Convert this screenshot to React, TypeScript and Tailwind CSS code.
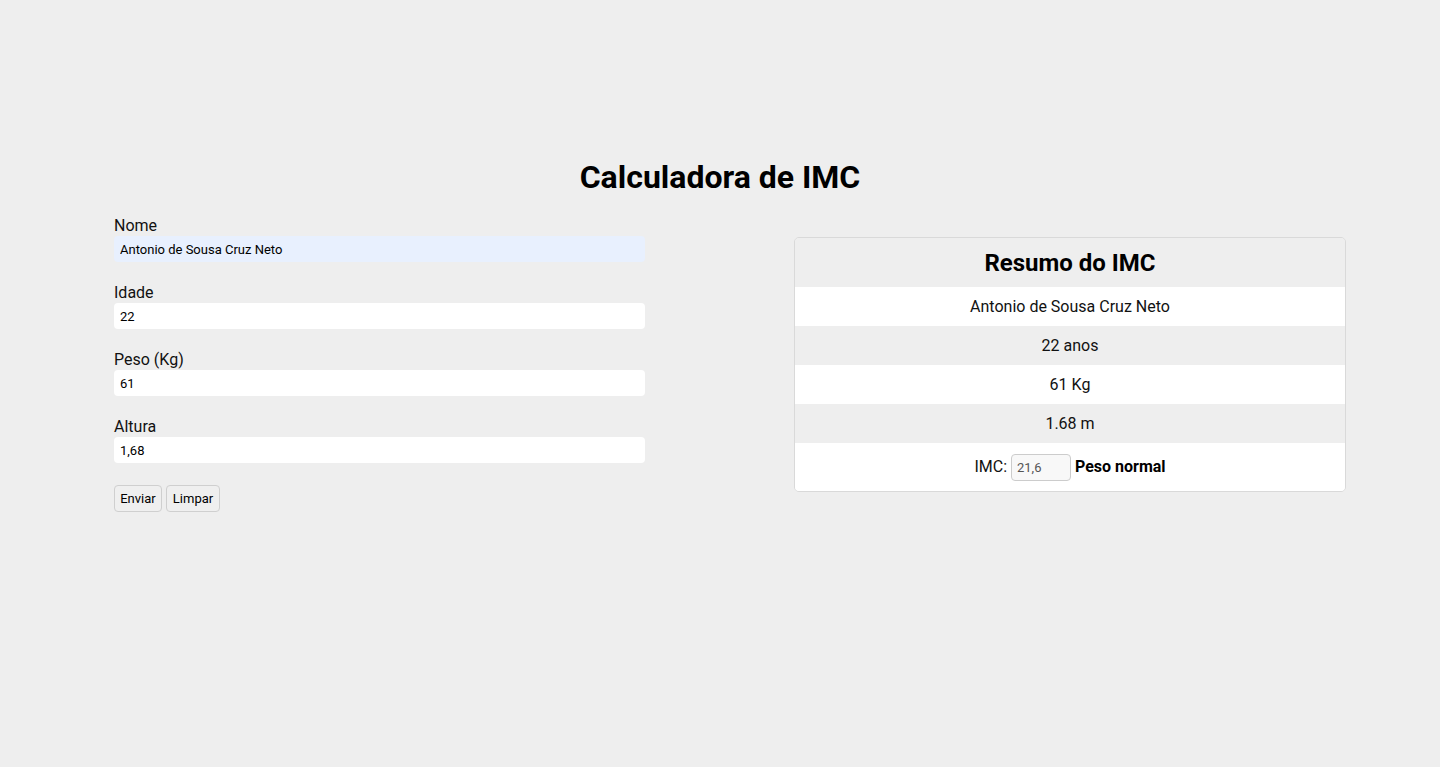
import { useState } from "react";

const resumo = [
  { texto: "Antonio de Sousa Cruz Neto", cinza: false },
  { texto: "22 anos", cinza: true },
  { texto: "61 Kg", cinza: false },
  { texto: "1.68 m", cinza: true },
];

export default function App() {
  const [nome, setNome] = useState("Antonio de Sousa Cruz Neto");
  const [idade, setIdade] = useState("22");
  const [peso, setPeso] = useState("61");
  const [altura, setAltura] = useState("1,68");

  const limpar = () => {
    setNome("");
    setIdade("");
    setPeso("");
    setAltura("");
  };

  const campos = [
    { id: "nome", label: "Nome", value: nome, set: setNome, auto: true },
    { id: "idade", label: "Idade", value: idade, set: setIdade, auto: false },
    { id: "peso", label: "Peso (Kg)", value: peso, set: setPeso, auto: false },
    { id: "altura", label: "Altura", value: altura, set: setAltura, auto: false },
  ];

  return (
    <div className="min-h-[767px] w-full bg-[#eeeeee] font-['Roboto',sans-serif] text-black">
      <h1 className="pt-[158px] text-center text-[32px] font-bold leading-[38px]">
        Calculadora de IMC
      </h1>

      <div className="mt-[20px] flex items-start pl-[114px]">
        <form className="flex w-[531px] flex-col" onSubmit={(e) => e.preventDefault()}>
          {campos.map((campo) => (
            <div key={campo.id} className="mb-[21px] flex flex-col">
              <label htmlFor={campo.id} className="text-[16px] leading-[19px] text-[#111]">
                {campo.label}
              </label>
              <input
                id={campo.id}
                type="text"
                value={campo.value}
                onChange={(e) => campo.set(e.target.value)}
                className={`mt-[1px] h-[26px] w-full rounded-[4px] px-[6px] text-[13px] text-black outline-none ${
                  campo.auto ? "bg-[#e8f0fe]" : "bg-white"
                }`}
              />
            </div>
          ))}

          <div className="mt-[1px] flex gap-[4px]">
            <button
              type="submit"
              className="h-[27px] w-[48px] rounded-[4px] border border-[#cfcfcf] bg-[#efefef] text-[13px] text-black"
            >
              Enviar
            </button>
            <button
              type="button"
              onClick={limpar}
              className="h-[27px] w-[54px] rounded-[4px] border border-[#cfcfcf] bg-[#efefef] text-[13px] text-black"
            >
              Limpar
            </button>
          </div>
        </form>

        <div className="ml-[149px] mt-[21px] w-[552px] overflow-hidden rounded-[5px] border border-[#d9d9d9]">
          <div className="flex h-[49px] items-center justify-center bg-[#eeeeee]">
            <h2 className="text-[24px] font-bold">Resumo do IMC</h2>
          </div>
          {resumo.map((linha) => (
            <div
              key={linha.texto}
              className={`flex h-[39px] items-center justify-center text-[16px] text-[#111] ${
                linha.cinza ? "bg-[#eeeeee]" : "bg-white"
              }`}
            >
              {linha.texto}
            </div>
          ))}
          <div className="flex h-[48px] items-center justify-center gap-[4px] bg-white text-[16px] text-[#111]">
            <span>IMC:</span>
            <input
              type="text"
              readOnly
              value="21,6"
              className="h-[27px] w-[60px] rounded-[4px] border border-[#cccccc] bg-[#f8f8f8] px-[5px] text-[13px] text-[#555] outline-none"
            />
            <strong className="font-bold text-black">Peso normal</strong>
          </div>
        </div>
      </div>
    </div>
  );
}
